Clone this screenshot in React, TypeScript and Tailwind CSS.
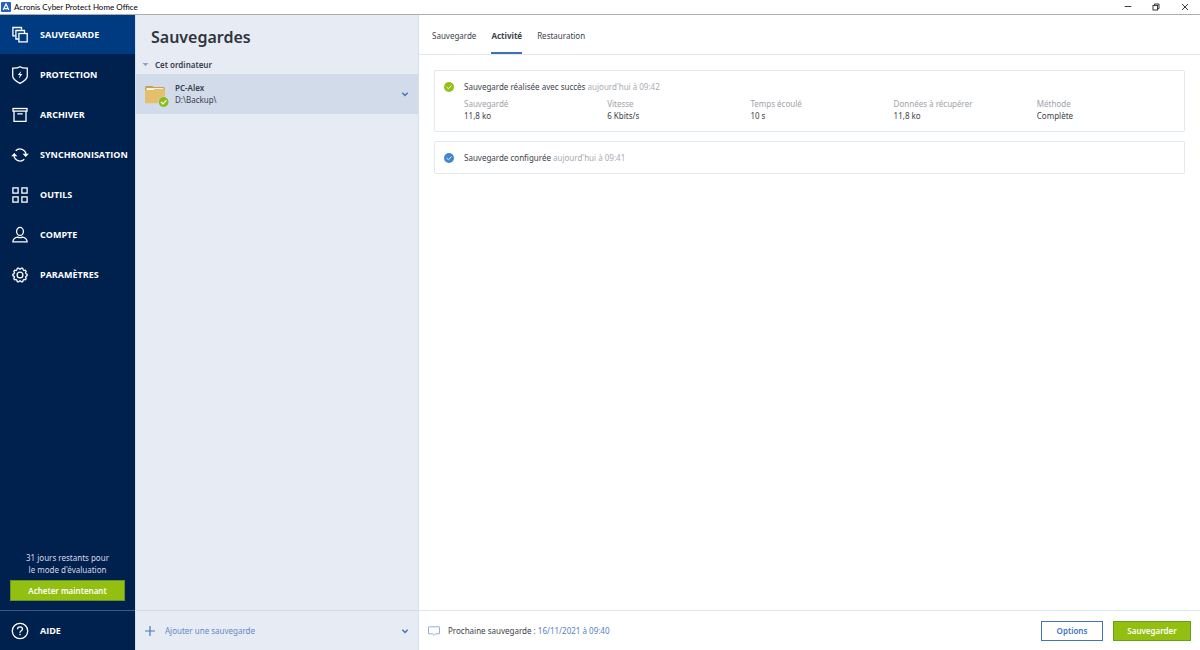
import { useState } from "react";
import type { ReactNode } from "react";

type IconProps = { children: ReactNode };

function NavIcon({ children }: IconProps) {
  return (
    <svg
      viewBox="0 0 20 20"
      className="size-5 shrink-0"
      fill="none"
      stroke="currentColor"
      strokeWidth="1.3"
      aria-hidden="true"
    >
      {children}
    </svg>
  );
}

function gearPath() {
  const points: string[] = [];
  const steps = 96;
  for (let i = 0; i <= steps; i++) {
    const a = (i / steps) * Math.PI * 2;
    const r = 6.6 + 0.6 * Math.tanh(2.5 * Math.cos(10 * a));
    const x = (10 + r * Math.cos(a)).toFixed(2);
    const y = (10 + r * Math.sin(a)).toFixed(2);
    points.push(`${i === 0 ? "M" : "L"}${x} ${y}`);
  }
  return points.join("") + "Z";
}

const navItems: { label: string; icon: ReactNode }[] = [
  {
    label: "SAUVEGARDE",
    icon: (
      <>
        <path d="M5.600 10.900H2.900V2.500h8.600v2.200" />
        <path d="M8.700 14H5.900V5.500h8.600v2.400" />
        <rect x="8.900" y="8.500" width="8.300" height="8.400" />
      </>
    ),
  },
  {
    label: "PROTECTION",
    icon: (
      <>
        <path d="M10 1.700C8 3.100 5.500 3.300 2.700 3.200V11c0 3.200 3.300 5.300 7.300 7.400 4-2.100 7.300-4.200 7.300-7.400V3.200C14.500 3.300 12 3.100 10 1.700Z" />
        <path d="M11.200 5.900 7.800 10h2l-.8 3.600 3.300-4.500h-2Z" fill="currentColor" stroke="none" />
      </>
    ),
  },
  {
    label: "ARCHIVER",
    icon: (
      <>
        <rect x="3" y="3.500" width="14" height="2.600" />
        <path d="M4 6.100v10.200h12V6.100M7.300 8.900h5.400" />
      </>
    ),
  },
  {
    label: "SYNCHRONISATION",
    icon: (
      <>
        <path d="M5.700 5.700A6.100 6.100 0 0 1 16 9.500M14.300 14.300A6.100 6.100 0 0 1 4 10.500" />
        <path d="M12.600 8.700h6.200l-3.100 3.300ZM1.200 11.300h6.200L4.300 8Z" fill="currentColor" stroke="none" />
      </>
    ),
  },
  {
    label: "OUTILS",
    icon: (
      <>
        <rect x="2.900" y="2.900" width="5.200" height="5.200" />
        <rect x="11.900" y="2.900" width="5.200" height="5.200" />
        <rect x="2.900" y="11.900" width="5.200" height="5.200" />
        <rect x="11.900" y="11.900" width="5.200" height="5.200" />
      </>
    ),
  },
  {
    label: "COMPTE",
    icon: (
      <>
        <ellipse cx="10" cy="6.400" rx="3.400" ry="4" />
        <path d="M2.900 16.900h14.200c0-2.700-1.800-4.100-4.500-4.700-1.800.7-3.400.7-5.200 0-2.700.6-4.500 2-4.500 4.700Z" />
      </>
    ),
  },
  {
    label: "PARAMÈTRES",
    icon: (
      <>
        <path d={gearPath()} />
        <circle cx="10" cy="10" r="2.900" />
      </>
    ),
  },
];

function Chevron() {
  return (
    <svg viewBox="0 0 8 8" className="size-2 shrink-0" fill="none" stroke="#3f6fba" strokeWidth="1.4" aria-hidden="true">
      <path d="M1.300 2.700 4 5.400l2.700-2.700" />
    </svg>
  );
}

function StatusDot({ color }: { color: string }) {
  return (
    <svg viewBox="0 0 10 10" className="size-[10px] shrink-0" aria-hidden="true">
      <circle cx="5" cy="5" r="5" fill={color} />
      <path d="M2.600 5 4.400 6.700 7.500 3.600" fill="none" stroke="#fff" strokeWidth="0.900" />
    </svg>
  );
}

const details = [
  { term: "Sauvegardé", value: "11,8 ko" },
  { term: "Vitesse", value: "6 Kbits/s" },
  { term: "Temps écoulé", value: "10 s" },
  { term: "Données à récupérer", value: "11,8 ko" },
  { term: "Méthode", value: "Complète" },
];

const tabs = ["Sauvegarde", "Activité", "Restauration"];

function TitleBar() {
  return (
    <header className="flex h-[15px] shrink-0 items-center border-b border-[#adadad] bg-white pl-px text-black">
      <svg viewBox="0 0 10 10" className="size-[10px]" aria-hidden="true">
        <rect width="10" height="10" rx="1" fill="#2460bd" />
        <path d="M2.200 8 5 2l2.800 6M3.500 6.600h3" fill="none" stroke="#fff" strokeWidth="1.200" />
      </svg>
      <h1 className="ml-[3px] flex-1 font-['Lato','Noto_Sans',sans-serif] text-[8px] leading-3">
        Acronis Cyber Protect Home Office
      </h1>
      <div className="flex">
        <button type="button" aria-label="Réduire" className="flex h-3 w-7 items-center justify-center">
          <svg viewBox="0 0 8 8" className="size-2" stroke="#222" strokeWidth="0.900">
            <path d="M.7 3.500h6.600" />
          </svg>
        </button>
        <button type="button" aria-label="Restaurer" className="flex h-3 w-7 items-center justify-center">
          <svg viewBox="0 0 8 8" className="size-2" fill="none" stroke="#222" strokeWidth="0.900">
            <rect x="1" y="2.400" width="4.600" height="4.600" />
            <path d="M2.500 2.400V1H7v4.600H5.600" />
          </svg>
        </button>
        <button type="button" aria-label="Fermer" className="flex h-3 w-[30px] items-center justify-center">
          <svg viewBox="0 0 8 8" className="size-2" stroke="#222" strokeWidth="0.900">
            <path d="m1 1 6 6M7 1 1 7" />
          </svg>
        </button>
      </div>
    </header>
  );
}

function Sidebar() {
  return (
    <aside className="flex w-[135px] shrink-0 flex-col bg-[#00204d] text-white">
      <nav className="flex flex-col">
        {navItems.map((item, i) => (
          <a
            key={item.label}
            href="#"
            className={
              i === 0
                ? "mb-px flex h-[39px] items-center gap-[10px] bg-[#003a80] pl-[10px]"
                : "flex h-10 items-center gap-[10px] pl-[10px]"
            }
          >
            <NavIcon>{item.icon}</NavIcon>
            <span className="font-['Open_Sans','Noto_Sans',sans-serif] text-[9px] leading-3 font-bold">
              {item.label}
            </span>
          </a>
        ))}
      </nav>
      <div className="mt-auto px-[10px] pb-[9px] text-center">
        <p className="text-[8px] leading-3 text-[#d5dbe6]">
          31 jours restants pour
          <br />
          le mode d'évaluation
        </p>
        <button
          type="button"
          className="mt-1 h-[21px] w-full border border-[#66942a] bg-[#93c010] text-[8px] leading-3 font-semibold text-white"
        >
          Acheter maintenant
        </button>
      </div>
      <a href="#" className="flex h-10 items-center gap-[10px] border-t border-[#41597e] pl-[10px]">
        <NavIcon>
          <circle cx="10" cy="10" r="7.700" />
          <path d="M7.500 8.200c0-1.500 1-2.400 2.500-2.400s2.500.8 2.500 2.200c0 1.700-2.500 1.800-2.500 3.700" />
          <path d="M10 12.800v1.500" />
        </NavIcon>
        <span className="font-['Open_Sans','Noto_Sans',sans-serif] text-[9px] leading-3 font-bold">AIDE</span>
      </a>
    </aside>
  );
}

function BackupList() {
  return (
    <section className="flex w-[284px] shrink-0 flex-col border-x border-[#d5dfed] bg-[#e7ebf4] text-[#36404d]">
      <h2 className="px-[15px] pt-[10px] text-[16px] leading-6 font-semibold text-[#2f353d]">Sauvegardes</h2>
      <button type="button" className="mt-2 mb-[2px] flex h-[15px] items-center gap-[6px] pl-[6px] text-left">
        <svg viewBox="0 0 7 7" className="size-[7px]" fill="#83a7d9" aria-hidden="true">
          <path d="M.5 2h6L3.500 5.200Z" />
        </svg>
        <span className="text-[8px] leading-3 font-semibold">Cet ordinateur</span>
      </button>
      <button type="button" className="flex h-10 items-center bg-[#d2dbea] pr-[9px] pl-2 text-left">
        <svg viewBox="0 0 26 28" className="h-7 w-[26px] shrink-0" aria-hidden="true">
          <path d="M1 7.500q0-1.500 1.500-1.500H8q1 0 1.600 1H19.500q1.500 0 1.500 1.500V11H1Z" fill="#c99f50" />
          <path d="M2.500 8.200h17v2h-17Z" fill="#fff" />
          <path d="M1 10.200h8l1.200-1.200H21v13.200q0 1-1 1H2q-1 0-1-1Z" fill="#e5bf6b" />
          <circle cx="19.600" cy="22" r="5.600" fill="#d2dbea" />
          <circle cx="19.600" cy="22" r="4.900" fill="#8cbc18" />
          <path d="m17 22 2 1.900 3.400-3.500" fill="none" stroke="#fff" strokeWidth="1.200" />
        </svg>
        <span className="ml-[5px] flex flex-1 flex-col text-[8px] leading-3">
          <span className="font-semibold">PC-Alex</span>
          <span>D:\Backup\</span>
        </span>
        <Chevron />
      </button>
      <button
        type="button"
        className="mt-auto flex h-10 items-center border-t border-[#cfdcee] pr-[9px] pl-[9px] text-left"
      >
        <svg viewBox="0 0 10 10" className="size-[10px]" stroke="#4a78bd" strokeWidth="1.200" aria-hidden="true">
          <path d="M5 0v10M0 5h10" />
        </svg>
        <span className="ml-[10px] flex-1 text-[8px] leading-3 text-[#628ac6]">Ajouter une sauvegarde</span>
        <Chevron />
      </button>
    </section>
  );
}

function Activity() {
  const [active, setActive] = useState("Activité");
  return (
    <main className="flex min-w-0 flex-1 flex-col bg-white text-[#3d4249]">
      <div role="tablist" className="flex h-10 gap-[15px] border-b border-[#dfe7f2] pl-[13px]">
        {tabs.map((tab) => (
          <button
            key={tab}
            type="button"
            role="tab"
            aria-selected={tab === active}
            onClick={() => setActive(tab)}
            className={
              tab === active
                ? "border-b-2 border-[#3f6fb5] pt-1 text-[8px] leading-3 font-bold"
                : "border-b-2 border-transparent pt-1 text-[8px] leading-3"
            }
          >
            {tab}
          </button>
        ))}
      </div>
      <div className="flex flex-1 flex-col gap-[9px] px-[15px] pt-[15px]">
        <article className="flex gap-[10px] rounded-xs border border-[#e1e8f1] pt-[10px] pr-1 pb-[9px] pl-[9px]">
          <div className="pt-px">
            <StatusDot color="#93bf1a" />
          </div>
          <div className="flex-1 text-[8px] leading-3">
            <p>
              Sauvegarde réalisée avec succès <time className="text-[#a9abaf]">aujourd'hui à 09:42</time>
            </p>
            <dl className="mt-[5px] grid grid-cols-5">
              {details.map((d) => (
                <div key={d.term}>
                  <dt className="text-[#a0a3a8]">{d.term}</dt>
                  <dd>{d.value}</dd>
                </div>
              ))}
            </dl>
          </div>
        </article>
        <article className="flex h-[33px] items-center gap-[10px] rounded-xs border border-[#e1e8f1] px-[9px] text-[8px] leading-3">
          <StatusDot color="#4086d2" />
          <p>
            Sauvegarde configurée <time className="text-[#a9abaf]">aujourd'hui à 09:41</time>
          </p>
        </article>
      </div>
      <footer className="flex h-10 items-center border-t border-[#dfe7f2] pr-[9px] pl-[9px] text-[8px] leading-3">
        <svg viewBox="0 0 12 10" className="h-[10px] w-3" fill="none" stroke="#82a5d8" strokeWidth="0.900" aria-hidden="true">
          <path d="M1 .8h10q.5 0 .5.500v6q0 .500-.5.500H7.600L6 9.400 4.400 7.800H1q-.5 0-.5-.5v-6q0-.5.500-.5Z" />
        </svg>
        <p className="ml-2 flex-1">
          Prochaine sauvegarde :{" "}
          <a href="#" className="text-[#5580c4]">
            16/11/2021 à 09:40
          </a>
        </p>
        <button
          type="button"
          className="h-5 w-[62px] border border-[#3f74ba] bg-white font-semibold text-[#3f74ba]"
        >
          Options
        </button>
        <button
          type="button"
          className="ml-[10px] h-5 w-[78px] border border-[#66a01e] bg-[#93c010] font-semibold text-white"
        >
          Sauvegarder
        </button>
      </footer>
    </main>
  );
}

export default function App() {
  return (
    <div className="flex min-h-screen flex-col font-['Noto_Sans','Open_Sans',sans-serif]">
      <TitleBar />
      <div className="flex flex-1">
        <Sidebar />
        <BackupList />
        <Activity />
      </div>
    </div>
  );
}
